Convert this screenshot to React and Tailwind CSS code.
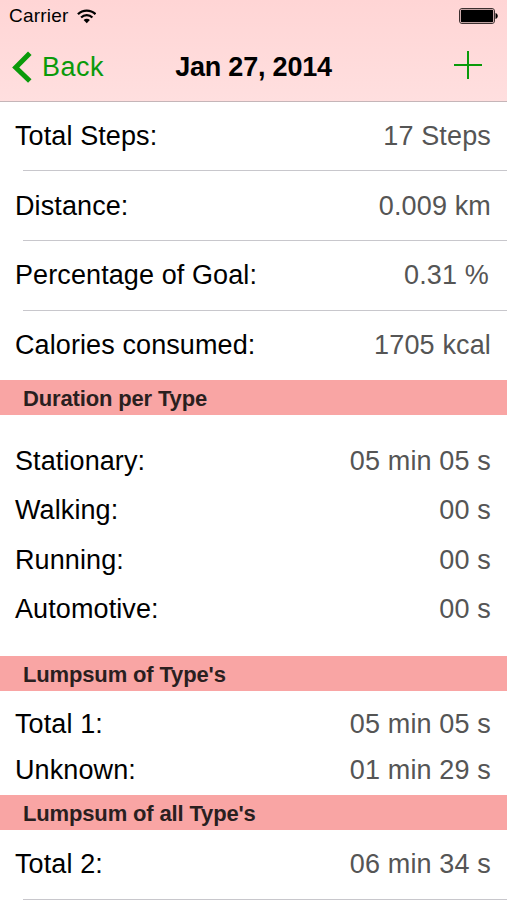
const summary = [
  { label: 'Total Steps:', value: '17 Steps', className: 'h-[68px]' },
  { label: 'Distance:', value: '0.009 km', className: 'h-[69px]' },
  { label: 'Percentage of Goal:', value: '0.31 %', className: 'h-[69px] pb-px pr-[18px]' },
  { label: 'Calories consumed:', value: '1705 kcal', className: 'h-[69px] pb-px pr-4' },
];

const durations = [
  { label: 'Stationary:', value: '05 min 05 s' },
  { label: 'Walking:', value: '00 s' },
  { label: 'Running:', value: '00 s' },
  { label: 'Automotive:', value: '00 s' },
];

const totals = [
  { label: 'Total 1:', value: '05 min 05 s' },
  { label: 'Unknown:', value: '01 min 29 s' },
];

function WifiIcon() {
  return (
    <svg className="ml-[8.5px] h-[15px] w-[19.5px]" viewBox="0 0 20 15" fill="none" stroke="#000">
      <path d="M1 5.2a12.8 12.8 0 0 1 18 0" strokeWidth="2.5" />
      <path d="M4.2 8.5a8.2 8.2 0 0 1 11.6 0" strokeWidth="2.3" />
      <path d="M10 14.4 6.8 11.2a4.5 4.5 0 0 1 6.4 0z" fill="#000" stroke="none" />
    </svg>
  );
}

function BatteryIcon() {
  return (
    <svg className="h-4 w-10" viewBox="0 0 40 16">
      <rect x="0.5" y="0.5" width="35" height="15" rx="2.5" fill="none" stroke="#3d3030" strokeWidth="1" />
      <rect x="1.8" y="1.8" width="32.4" height="12.4" rx="1.2" fill="#000" />
      <path d="M36.5 5c3 .8 3 5.2 0 6z" fill="#000" />
    </svg>
  );
}

function Row({ label, value, className }) {
  return (
    <div className={`flex items-center justify-between pl-[15px] ${className}`}>
      <span className="tracking-[0.1px] text-black">{label}</span>
      <span className="tracking-[0.15px] text-[#555]">{value}</span>
    </div>
  );
}

function SectionHeader({ children }) {
  return (
    <h2 className="h-[35px] bg-[#f9a5a4] pl-[23px] pt-[3px] text-[22px] leading-[32px] font-bold tracking-[-0.15px] text-[#2a1f1f]">
      {children}
    </h2>
  );
}

function Divider() {
  return <div className="ml-[23px] h-px bg-[#c8c7cc]" />;
}

export default function App() {
  return (
    <div className="h-[900px] w-[507px] overflow-hidden bg-white font-['Liberation_Sans',Arial,sans-serif] text-[27px] leading-[32px]">
      <header className="h-[102px] border-b border-[#c5b5b8] bg-linear-to-b from-[#ffd5d5] to-[#ffdfdf]">
        <div className="flex h-8 items-center pl-[9px] pr-[8px]">
          <span className="text-[19px] tracking-[0.2px]">Carrier</span>
          <WifiIcon />
          <div className="ml-auto">
            <BatteryIcon />
          </div>
        </div>
        <div className="grid h-[69px] grid-cols-[150px_1fr_150px] items-center">
          <button className="flex items-center pl-3 text-[#0a9a0a]">
            <svg className="h-8 w-5" viewBox="0 0 20 32" fill="none" stroke="currentColor" strokeWidth="5">
              <path d="M17.8 2.2 3.7 16.5 17.8 30" />
            </svg>
            <span className="ml-[10px] tracking-[0.5px]">Back</span>
          </button>
          <h1 className="text-center font-bold tracking-[-0.2px]">Jan 27, 2014</h1>
          <button className="ml-auto mr-[25px] text-[#0a9a0a]">
            <svg className="mb-1 h-7 w-7" viewBox="0 0 28 28" stroke="currentColor" strokeWidth="2">
              <path d="M14 0v28M0 14h28" />
            </svg>
          </button>
        </div>
      </header>

      <main>
        {summary.map((row, i) => (
          <div key={row.label}>
            {i > 0 && <Divider />}
            <Row {...row} className={i < 2 ? `${row.className} pr-4` : row.className} />
          </div>
        ))}

        <SectionHeader>Duration per Type</SectionHeader>
        <div className="h-[241px] pt-[21.3px]">
          {durations.map((row) => (
            <Row key={row.label} {...row} className="h-[49.3px] pr-4" />
          ))}
        </div>

        <SectionHeader>Lumpsum of Type's</SectionHeader>
        <div className="h-[104px] pt-[10px]">
          {totals.map((row) => (
            <Row key={row.label} {...row} className="h-[46px] pr-4" />
          ))}
        </div>

        <SectionHeader>Lumpsum of all Type's</SectionHeader>
        <Row label="Total 2:" value="06 min 34 s" className="h-[69px] pb-px pr-4" />
        <Divider />
      </main>
    </div>
  );
}
